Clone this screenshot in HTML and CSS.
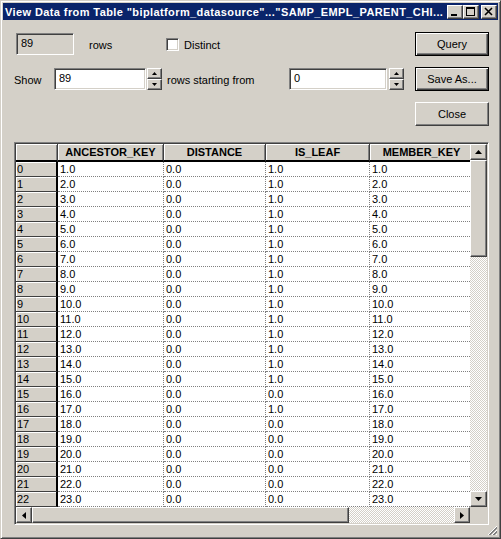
FILE: index.html
```html
<!DOCTYPE html>
<html lang="en">
  <head>
    <meta charset="UTF-8" />
    <title>View Data from Table</title>
    <link rel="stylesheet" href="styles.css">
  </head>
  <body>
    <div class="window">
      <div class="titlebar">
        <span class="title">View Data from Table "biplatform_datasource"..."SAMP_EMPL_PARENT_CHI...</span>
        <div class="caption">
          <span class="cap-btn">
            <svg width="14" height="12" viewBox="0 0 14 12"><rect x="3" y="8" width="6" height="2" fill="#000"/></svg>
          </span>
          <span class="cap-btn">
            <svg width="14" height="12" viewBox="0 0 14 12"><rect x="2.5" y="1.5" width="8" height="8" fill="none" stroke="#000"/><rect x="2" y="1" width="9" height="2" fill="#000"/></svg>
          </span>
          <span class="cap-btn close">
            <svg width="14" height="12" viewBox="0 0 14 12"><path d="M3 2L10 9M10 2L3 9" stroke="#000" stroke-width="1.6"/></svg>
          </span>
        </div>
      </div>

      <div class="content">
        <div class="top">
          <div class="fields">
            <div class="row">
              <div class="field readonly count">89</div>
              <span class="label rows-label">rows</span>
              <span class="checkbox"></span>
              <span class="label distinct">Distinct</span>
            </div>
            <div class="row">
              <span class="label show-label">Show</span>
              <div class="field show">89</div>
              <div class="spinner">
                <span class="spin"><svg width="5" height="3" viewBox="0 0 5 3"><path d="M2.5 0L5 3H0Z" fill="#000"/></svg></span>
                <span class="spin"><svg width="5" height="3" viewBox="0 0 5 3"><path d="M0 0H5L2.5 3Z" fill="#000"/></svg></span>
              </div>
              <span class="label start-label">rows starting from</span>
              <div class="field start">0</div>
              <div class="spinner">
                <span class="spin"><svg width="5" height="3" viewBox="0 0 5 3"><path d="M2.5 0L5 3H0Z" fill="#000"/></svg></span>
                <span class="spin"><svg width="5" height="3" viewBox="0 0 5 3"><path d="M0 0H5L2.5 3Z" fill="#000"/></svg></span>
              </div>
            </div>
          </div>
          <div class="buttons">
            <button class="btn default">Query</button>
            <button class="btn default">Save As...</button>
            <button class="btn">Close</button>
          </div>
        </div>

        <div class="grid-frame">
          <div class="viewport">
            <table class="data">
              <thead>
                <tr><th></th><th>ANCESTOR_KEY</th><th>DISTANCE</th><th>IS_LEAF</th><th>MEMBER_KEY</th></tr>
              </thead>
              <tbody>
                <tr><th>0</th><td>1.0</td><td>0.0</td><td>1.0</td><td>1.0</td></tr>
                <tr><th>1</th><td>2.0</td><td>0.0</td><td>1.0</td><td>2.0</td></tr>
                <tr><th>2</th><td>3.0</td><td>0.0</td><td>1.0</td><td>3.0</td></tr>
                <tr><th>3</th><td>4.0</td><td>0.0</td><td>1.0</td><td>4.0</td></tr>
                <tr><th>4</th><td>5.0</td><td>0.0</td><td>1.0</td><td>5.0</td></tr>
                <tr><th>5</th><td>6.0</td><td>0.0</td><td>1.0</td><td>6.0</td></tr>
                <tr><th>6</th><td>7.0</td><td>0.0</td><td>1.0</td><td>7.0</td></tr>
                <tr><th>7</th><td>8.0</td><td>0.0</td><td>1.0</td><td>8.0</td></tr>
                <tr><th>8</th><td>9.0</td><td>0.0</td><td>1.0</td><td>9.0</td></tr>
                <tr><th>9</th><td>10.0</td><td>0.0</td><td>1.0</td><td>10.0</td></tr>
                <tr><th>10</th><td>11.0</td><td>0.0</td><td>1.0</td><td>11.0</td></tr>
                <tr><th>11</th><td>12.0</td><td>0.0</td><td>1.0</td><td>12.0</td></tr>
                <tr><th>12</th><td>13.0</td><td>0.0</td><td>1.0</td><td>13.0</td></tr>
                <tr><th>13</th><td>14.0</td><td>0.0</td><td>1.0</td><td>14.0</td></tr>
                <tr><th>14</th><td>15.0</td><td>0.0</td><td>1.0</td><td>15.0</td></tr>
                <tr><th>15</th><td>16.0</td><td>0.0</td><td>0.0</td><td>16.0</td></tr>
                <tr><th>16</th><td>17.0</td><td>0.0</td><td>1.0</td><td>17.0</td></tr>
                <tr><th>17</th><td>18.0</td><td>0.0</td><td>0.0</td><td>18.0</td></tr>
                <tr><th>18</th><td>19.0</td><td>0.0</td><td>0.0</td><td>19.0</td></tr>
                <tr><th>19</th><td>20.0</td><td>0.0</td><td>0.0</td><td>20.0</td></tr>
                <tr><th>20</th><td>21.0</td><td>0.0</td><td>0.0</td><td>21.0</td></tr>
                <tr><th>21</th><td>22.0</td><td>0.0</td><td>0.0</td><td>22.0</td></tr>
                <tr><th>22</th><td>23.0</td><td>0.0</td><td>0.0</td><td>23.0</td></tr>
              </tbody>
            </table>
          </div>
          <div class="vscroll">
            <span class="sbtn"><svg width="7" height="4" viewBox="0 0 7 4"><path d="M3.5 0L7 4H0Z" fill="#000"/></svg></span>
            <span class="thumb vthumb"></span>
            <span class="track"></span>
            <span class="sbtn"><svg width="7" height="4" viewBox="0 0 7 4"><path d="M0 0H7L3.5 4Z" fill="#000"/></svg></span>
          </div>
          <div class="hscroll">
            <span class="sbtn"><svg width="4" height="7" viewBox="0 0 4 7"><path d="M0 3.5L4 0V7Z" fill="#000"/></svg></span>
            <span class="thumb hthumb"></span>
            <span class="track"></span>
            <span class="sbtn"><svg width="4" height="7" viewBox="0 0 4 7"><path d="M0 0L4 3.5L0 7Z" fill="#000"/></svg></span>
          </div>
          <div class="corner"></div>
        </div>
      </div>

      <div class="footer">
        <svg class="grip" width="11" height="11" viewBox="0 0 11 11">
          <path d="M10 1L1 10M10 5L5 10M10 9L9 10" stroke="#fff"/>
          <path d="M10 2L2 10M10 3L3 10M10 6L6 10M10 7L7 10" stroke="#808080"/>
        </svg>
      </div>
    </div>
  </body>
</html>
```

FILE: styles.css
```css
body {
  margin: 0;
  background-color: #d4d0c8;
  font-family: "Liberation Sans", Arial, sans-serif;
  font-size: 11px;
  color: #000;
}
.window {
  box-sizing: border-box;
  width: 501px;
  height: 539px;
  display: flex;
  flex-direction: column;
  padding: 2px;
  background-color: #d4d0c8;
  border: 1px solid;
  border-color: #d4d0c8 #404040 #404040 #d4d0c8;
  box-shadow: inset 1px 1px #fff, inset -1px -1px #808080;
}
/* title bar */
.titlebar {
  height: 18px;
  display: flex;
  align-items: center;
  justify-content: space-between;
  background-color: #0a246a;
  padding: 0 1px 0 2px;
}
.title {
  color: #fff;
  font-weight: bold;
  font-size: 11px;
  letter-spacing: 0.4px;
  white-space: nowrap;
}
.caption {
  display: flex;
}
.cap-btn {
  box-sizing: border-box;
  width: 16px;
  height: 14px;
  display: flex;
  background-color: #d4d0c8;
  border: 1px solid;
  border-color: #fff #404040 #404040 #fff;
  box-shadow: inset -1px -1px #808080;
}
.cap-btn.close {
  margin-left: 2px;
}
/* controls */
.content {
  height: 505px;
  box-sizing: border-box;
  padding: 12px 9px 0 11px;
  display: flex;
  flex-direction: column;
}
.top {
  display: flex;
  justify-content: space-between;
}
.fields {
  padding-top: 1px;
}
.row {
  display: flex;
  align-items: center;
  height: 22px;
}
.row + .row {
  margin-top: 13px;
}
.label {
  padding-top: 1px;
}
.field {
  box-sizing: border-box;
  height: 22px;
  line-height: 18px;
  padding-left: 4px;
  background-color: #fff;
  border: 1px solid;
  border-color: #808080 #fff #fff #808080;
  box-shadow: inset 1px 1px #404040, inset -1px -1px #d4d0c8;
}
.field.readonly {
  background-color: #d4d0c8;
}
.count {
  width: 58px;
  margin-left: 2px;
}
.rows-label {
  width: 77px;
  margin-left: 15px;
}
.checkbox {
  box-sizing: border-box;
  width: 13px;
  height: 13px;
  background-color: #fff;
  border: 1px solid;
  border-color: #808080 #fff #fff #808080;
  box-shadow: inset 1px 1px #404040, inset -1px -1px #d4d0c8;
}
.distinct {
  margin-left: 5px;
}
.show-label {
  width: 40px;
}
.show {
  width: 92px;
}
.start-label {
  width: 122px;
  margin-left: 5px;
}
.start {
  width: 98px;
}
.spinner {
  display: flex;
  flex-direction: column;
  width: 15px;
  height: 22px;
  margin-left: 1px;
}
.start + .spinner {
  margin-left: 2px;
}
.spin {
  box-sizing: border-box;
  flex: 1;
  display: flex;
  align-items: center;
  justify-content: center;
  background-color: #d4d0c8;
  border: 1px solid;
  border-color: #fff #404040 #404040 #fff;
  box-shadow: inset -1px -1px #808080;
}
.buttons {
  width: 74px;
  display: flex;
  flex-direction: column;
  gap: 11px;
}
.btn {
  box-sizing: border-box;
  height: 24px;
  padding: 0;
  font-family: "Liberation Sans", Arial, sans-serif;
  font-size: 11px;
  color: #000;
  background-color: #d4d0c8;
  border: 1px solid;
  border-color: #fff #404040 #404040 #fff;
  box-shadow: inset -1px -1px #808080;
}
.btn.default {
  border-color: #000;
  box-shadow: inset 1px 1px #fff, inset -1px -1px #404040, inset -2px -2px #808080;
}
/* data grid */
.grid-frame {
  margin-top: 16px;
  height: 383px;
  box-sizing: border-box;
  display: grid;
  grid-template-columns: 1fr 17px;
  grid-template-rows: 1fr 16px;
  border: 1px solid;
  border-color: #808080 #fff #fff #808080;
  box-shadow: inset 1px 1px #404040, inset -1px -1px #d4d0c8;
  padding: 1px;
}
.viewport {
  overflow: hidden;
  background-color: #fff;
}
.data {
  table-layout: fixed;
  border-collapse: separate;
  border-spacing: 0;
  width: 458px;
  font-size: 11px;
}
.data th,
.data td {
  box-sizing: border-box;
  padding: 0;
  line-height: 13px;
  white-space: nowrap;
  overflow: hidden;
}
.data thead tr {
  height: 18px;
}
.data tbody tr {
  height: 15px;
}
.data thead th {
  background-color: #d4d0c8;
  font-weight: bold;
  text-align: center;
  padding-top: 1px;
  border-right: 1px solid #404040;
  border-bottom: 2px solid #000;
  box-shadow: inset 1px 1px #fff, inset -1px 0 #808080;
}
.data thead th:nth-child(1) { width: 42px; }
.data thead th:nth-child(2) { width: 106px; }
.data thead th:nth-child(3) { width: 102px; }
.data thead th:nth-child(4) { width: 104px; }
.data thead th:nth-child(5) { width: 104px; }
.data tbody th {
  text-align: left;
  font-weight: normal;
  padding-left: 1px;
  background-color: #d4d0c8;
  border-right: 2px solid #000;
  border-bottom: 1px solid #404040;
  box-shadow: inset 1px 1px #fff;
}
.data td {
  padding-left: 2px;
  background-color: #fff;
  border-right: 1px dotted #808080;
  border-bottom: 1px dotted #808080;
}
.vscroll,
.hscroll {
  display: flex;
}
.vscroll {
  flex-direction: column;
}
.sbtn,
.thumb {
  box-sizing: border-box;
  background-color: #d4d0c8;
  border: 1px solid;
  border-color: #fff #404040 #404040 #fff;
  box-shadow: inset -1px -1px #808080;
}
.sbtn {
  display: flex;
  align-items: center;
  justify-content: center;
}
.vscroll .sbtn {
  height: 16px;
}
.hscroll .sbtn {
  width: 16px;
}
.vthumb {
  height: 97px;
}
.hthumb {
  width: 317px;
}
.track {
  flex: 1;
  background-color: #fff;
  background-image: repeating-conic-gradient(#d4d0c8 0% 25%, #fff 0% 50%);
  background-size: 2px 2px;
}
.corner {
  background-color: #d4d0c8;
}
.footer {
  flex: 1;
  display: flex;
  justify-content: flex-end;
  align-items: flex-end;
}
.grip {
  display: block;
}
```
